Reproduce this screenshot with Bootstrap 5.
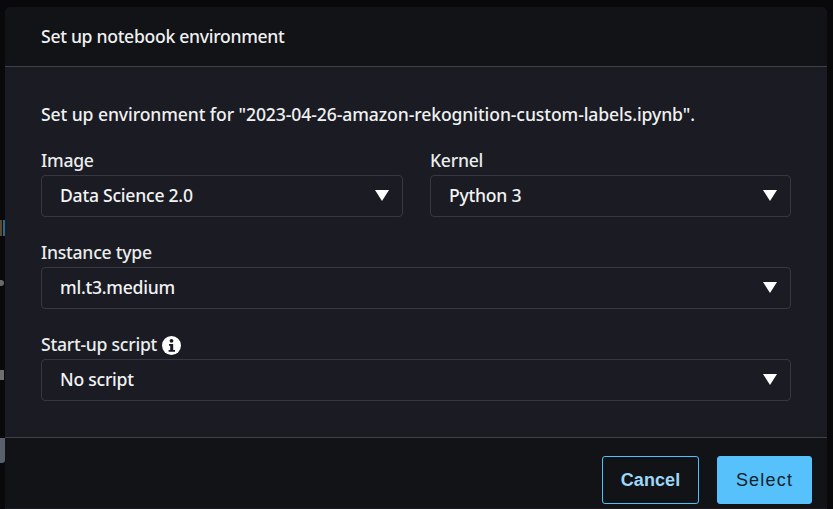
<!DOCTYPE html>
<html lang="en">
<head>
<meta charset="utf-8">
<title>Set up notebook environment</title>
<link href="https://cdn.jsdelivr.net/npm/bootstrap@5.3.0/dist/css/bootstrap.min.css" rel="stylesheet">
<style>
html,body{height:509px;overflow:hidden;background:#09090b;}
body{font-family:"Noto Sans","Open Sans",sans-serif;color:#eaeded;font-size:17.6px;letter-spacing:-.25px;position:relative;}
.stage{height:509px;padding:7px 6px 0 5px;}
.dlg{height:502px;background:#1a1b23;border-radius:6px 6px 0 0;}
.dlg-head{height:60px;padding:0 36px;background:#121317;border-bottom:1px solid #3f4046;border-radius:6px 6px 0 0;font-weight:500;letter-spacing:-.3px;color:#f0f1f1;}
.dlg-body{padding:35px 36px 0;height:371px;}
.lead-line{line-height:24px;font-weight:500;letter-spacing:-.1px;margin-bottom:23px;color:#f0f1f1;}
.fld-grid{display:grid;grid-template-columns:362px 361px;column-gap:27px;row-gap:24px;}
.fld-wide{grid-column:1 / 3;}
.fld-label{line-height:22px;font-weight:500;margin:0 0 2px;color:#eaeded;height:24px;}
.picker{height:42px;border:1px solid #373840;border-radius:4px;padding:0 18px 1px;font-weight:500;color:#f2f3f3;}
.caret-tri{width:14px;height:11px;flex:none;margin-right:-5px;margin-top:0;}
.info-row{line-height:24px;}
.info-txt{position:relative;top:-1px;}
.info-ic{width:19px;height:19px;margin-left:5px;flex:none;}
.dlg-foot{height:71px;background:#121317;border-top:1px solid #3f4046;padding:18px 15px 0 0;margin-top:-1px;gap:18px;}
.btn-ghost,.btn-solid{height:48px;border-radius:3px;font-family:"Liberation Sans",Arial,sans-serif;font-size:18px;padding:0;}
.btn-ghost{width:97px;border:1px solid #4fc0f9;background:transparent;color:#9dd8f8;font-weight:700;letter-spacing:.1px;}
.btn-solid{width:95px;border:1px solid #56c1fa;background:#56c1fa;color:#15232c;letter-spacing:1.2px;}
.btn-ghost:hover{background:transparent;color:#9dd8f8;border-color:#4fc0f9;}
.btn-solid:hover{background:#56c1fa;color:#15232c;border-color:#56c1fa;}
.back-frag{position:absolute;left:0;}
.frag-a{top:220px;height:16px;width:5px;background:linear-gradient(90deg,#5a4a2e 0 2px,#0f0f12 2px 3px,#2a6a8c 3px 5px);}
.frag-b{top:280px;height:6px;width:4px;background:#6a6a6a;border-radius:0 3px 3px 0;}
.frag-c{top:370px;height:10px;width:4px;background:#6e6e6e;}
.frag-d{top:438px;height:25px;width:5px;background:#59606c;border-radius:0 0 3px 0;}
</style>
</head>
<body>
<div class="back-frag frag-a"></div>
<div class="back-frag frag-b"></div>
<div class="back-frag frag-c"></div>
<div class="back-frag frag-d"></div>
<div class="stage">
  <div class="dlg d-flex flex-column">
    <div class="dlg-head d-flex align-items-center">Set up notebook environment</div>
    <div class="dlg-body">
      <p class="lead-line">Set up environment for "2023-04-26-amazon-rekognition-custom-labels.ipynb".</p>
      <div class="fld-grid">
        <div>
          <div class="fld-label">Image</div>
          <div class="picker d-flex align-items-center justify-content-between">Data Science 2.0
            <svg class="caret-tri" viewBox="0 0 14 11"><polygon points="0,0 14,0 7,11" fill="#fff"/></svg></div>
        </div>
        <div>
          <div class="fld-label">Kernel</div>
          <div class="picker d-flex align-items-center justify-content-between">Python 3
            <svg class="caret-tri" viewBox="0 0 14 11"><polygon points="0,0 14,0 7,11" fill="#fff"/></svg></div>
        </div>
        <div class="fld-wide">
          <div class="fld-label">Instance type</div>
          <div class="picker d-flex align-items-center justify-content-between">ml.t3.medium
            <svg class="caret-tri" viewBox="0 0 14 11"><polygon points="0,0 14,0 7,11" fill="#fff"/></svg></div>
        </div>
        <div class="fld-wide">
          <div class="fld-label info-row d-flex align-items-center"><span class="info-txt">Start-up script</span>
            <svg class="info-ic" viewBox="0 0 19 19"><circle cx="9.5" cy="9.5" r="9.5" fill="#fff"/><circle cx="9.5" cy="4.8" r="1.9" fill="#1a1b23"/><path d="M7 8h4.2v6H13v1.8H6.6V14h1.6V9.8H7z" fill="#1a1b23"/></svg></div>
          <div class="picker d-flex align-items-center justify-content-between">No script
            <svg class="caret-tri" viewBox="0 0 14 11"><polygon points="0,0 14,0 7,11" fill="#fff"/></svg></div>
        </div>
      </div>
    </div>
    <div class="dlg-foot d-flex justify-content-end align-items-start">
      <button type="button" class="btn btn-ghost">Cancel</button>
      <button type="button" class="btn btn-solid">Select</button>
    </div>
  </div>
</div>
</body>
</html>
